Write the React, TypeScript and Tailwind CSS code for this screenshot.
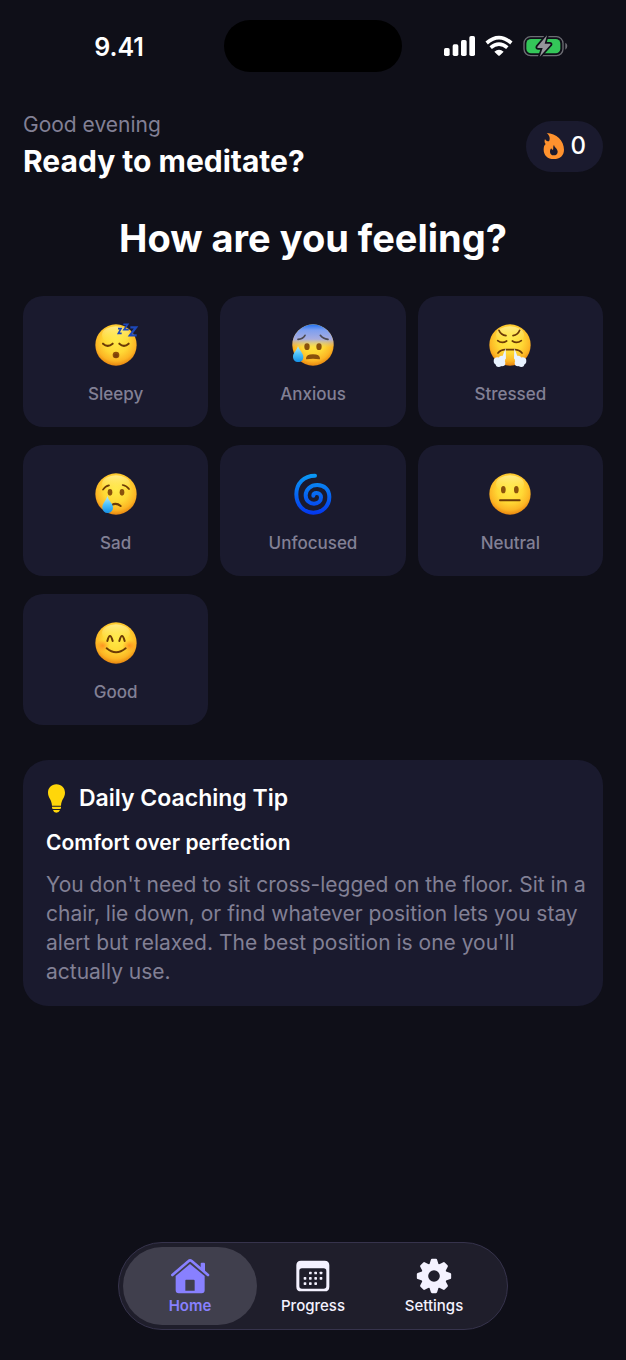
import { useId, useState } from "react";
import type { ReactNode } from "react";

const BROWN = "#6b3a06";

function Face({ children, blue = false }: { children: ReactNode; blue?: boolean }) {
    const id = useId();
    return (
        <svg viewBox="-72 -72 144 144" className="h-12 w-12" aria-hidden="true">
            <defs>
                <radialGradient id={`${id}base`} cx="0.5" cy="0.4" r="0.61">
                    <stop offset="0" stopColor="#ffea48" />
                    <stop offset="0.5" stopColor="#ffd835" />
                    <stop offset="0.8" stopColor="#fcb524" />
                    <stop offset="1" stopColor="#e6820e" />
                </radialGradient>
                <linearGradient id={`${id}blue`} x1="0" y1="0" x2="0" y2="1">
                    <stop offset="0" stopColor="#2270f0" />
                    <stop offset="0.14" stopColor="#7d9ff0" />
                    <stop offset="0.36" stopColor="#a8addf" />
                    <stop offset="0.56" stopColor="#d9bd8a" stopOpacity="0" />
                </linearGradient>
                <linearGradient id={`${id}shine`} x1="0" y1="0" x2="0" y2="1">
                    <stop offset="0" stopColor="#fffbc0" stopOpacity="0.6" />
                    <stop offset="1" stopColor="#ffee55" stopOpacity="0" />
                </linearGradient>
            </defs>
            <circle r="62" fill={`url(#${id}base)`} />
            {!blue && <ellipse cy="-30" rx="42" ry="26" fill={`url(#${id}shine)`} />}
            {blue && <circle r="62" fill={`url(#${id}blue)`} />}
            {children}
        </svg>
    );
}

function Tear({ d }: { d: string }) {
    const id = useId();
    return (
        <>
            <defs>
                <linearGradient id={id} x1="0" y1="0" x2="0" y2="1">
                    <stop offset="0" stopColor="#b8edff" />
                    <stop offset="0.5" stopColor="#4fc3fa" />
                    <stop offset="1" stopColor="#1590e6" />
                </linearGradient>
            </defs>
            <path d={d} fill={`url(#${id})`} />
        </>
    );
}

function Sleepy() {
    return (
        <Face>
            <g fill="none" stroke={BROWN} strokeWidth="6" strokeLinecap="round">
                <path d="M-39-4Q-25 9-10-4" />
                <path d="M10-4Q24 9 38-4" />
            </g>
            <circle cy="30" r="10" fill="#8f4d08" />
            <circle cy="32" r="6" fill="#7a400a" />
            <g fill="none" stroke="#1d48ba" strokeLinejoin="miter">
                <path d="M6-49H15L7-35H17" strokeWidth="5" />
                <path d="M22-62H35L24-46H38" strokeWidth="5" />
                <path d="M43-53H60L42-29H62" strokeWidth="7" />
            </g>
        </Face>
    );
}

function Anxious() {
    return (
        <Face blue>
            <g fill="none" stroke="#4c4a50" strokeWidth="5" strokeLinecap="round">
                <path d="M-45-17Q-30-18-24-29" />
                <path d="M45-17Q30-18 22-29" />
            </g>
            <ellipse cx="-18" cy="5" rx="8" ry="10" fill="#8a520c" />
            <ellipse cx="18" cy="5" rx="8" ry="10" fill="#8a520c" />
            <path d="M-19 41C-19 32-12 30 0 30S19 32 19 41Q0 37-19 41Z" fill="#8a520c" stroke="#8a520c" strokeWidth="4" strokeLinejoin="round" />
            <Tear d="M-45 3C-41 16-29 24-29 36C-29 45-35 51-44 51C-54 51-60 44-60 35C-60 24-49 17-45 3Z" />
        </Face>
    );
}

function Stressed() {
    return (
        <Face>
            <g fill="none" stroke={BROWN} strokeWidth="5" strokeLinecap="round">
                <path d="M-33-44Q-27-30-12-28" />
                <path d="M29-44Q24-30 9-28" />
                <path d="M-37-13Q-24-3-10-12" />
                <path d="M7-12Q20-3 34-13" />
                <path d="M-36 24Q-28 14-14 14H14Q28 14 36 24" />
            </g>
            <g fill="#e9f3ff">
                <path d="M-13 9L-24 38L-12 42Z" />
                <path d="M13 9L12 42L24 38Z" />
                <circle cx="-24" cy="42" r="10" />
                <circle cx="-38" cy="48" r="11" />
                <circle cx="-24" cy="54" r="10" />
                <circle cx="-34" cy="57" r="9" />
                <circle cx="24" cy="42" r="10" />
                <circle cx="38" cy="48" r="11" />
                <circle cx="24" cy="54" r="10" />
                <circle cx="34" cy="57" r="9" />
            </g>
        </Face>
    );
}

function Sad() {
    return (
        <Face>
            <g fill="none" stroke={BROWN} strokeWidth="5" strokeLinecap="round">
                <path d="M-39-13Q-32-24-21-26" />
                <path d="M39-15Q32-25 20-27" />
                <path d="M-13 33Q1 25 14 36" strokeWidth="6" />
            </g>
            <ellipse cx="-18" cy="-5" rx="7" ry="10" fill="#8a520c" />
            <ellipse cx="18" cy="-5" rx="7" ry="10" fill="#8a520c" />
            <Tear d="M-26 6C-22 21-9 29-9 41C-9 50-16 57-25 57C-35 57-41 50-41 40C-41 28-30 21-26 6Z" />
        </Face>
    );
}

function Unfocused() {
    return (
        <svg viewBox="25 32 144 144" className="h-12 w-12" aria-hidden="true">
            <defs>
                <linearGradient id="swirl" gradientUnits="userSpaceOnUse" x1="0" y1="44" x2="0" y2="165">
                    <stop offset="0" stopColor="#0a9af5" />
                    <stop offset="1" stopColor="#0437ee" />
                </linearGradient>
            </defs>
            <path
                d="M103 49C70 49 47 72 47 105C47 137 69 160 98 160C126 160 146 139 146 113C146 90 130 77 110 77C90 77 75 90 75 108C75 123 86 133 100 133C113 133 121 125 121 114C121 106 115 101 108 101C102 101 98 104 98 109"
                fill="none"
                stroke="url(#swirl)"
                strokeWidth="12"
                strokeLinecap="round"
            />
        </svg>
    );
}

function Neutral() {
    return (
        <Face>
            <ellipse cx="-20" cy="-13" rx="7" ry="11" fill="#8a520c" />
            <ellipse cx="19" cy="-13" rx="7" ry="11" fill="#8a520c" />
            <path d="M-30 19H29" stroke={BROWN} strokeWidth="6" strokeLinecap="round" />
        </Face>
    );
}

function Good() {
    const id = useId();
    return (
        <Face>
            <defs>
                <radialGradient id={id}>
                    <stop offset="0" stopColor="#ff7a1a" stopOpacity="0.7" />
                    <stop offset="1" stopColor="#ff8a1a" stopOpacity="0" />
                </radialGradient>
            </defs>
            <ellipse cx="-40" cy="8" rx="21" ry="18" fill={`url(#${id})`} />
            <ellipse cx="40" cy="8" rx="21" ry="18" fill={`url(#${id})`} />
            <g fill="none" stroke={BROWN} strokeWidth="6" strokeLinecap="round">
                <path d="M-26-6Q-18-36-10-6" />
                <path d="M10-6Q18-36 26-6" />
                <path d="M-28 16Q0 40 29 16" />
            </g>
        </Face>
    );
}

function SignalIcon() {
    return (
        <svg viewBox="72 45 93 66" className="h-[22px] w-[31px]" fill="#fff" aria-hidden="true">
            <rect x="72" y="84" width="17" height="24" rx="5" />
            <rect x="98" y="73" width="17" height="35" rx="5" />
            <rect x="123" y="60" width="17" height="48" rx="5" />
            <rect x="148" y="48" width="17" height="60" rx="5" />
        </svg>
    );
}

function WifiIcon() {
    return (
        <svg viewBox="196 45 84 66" className="h-[22px] w-7" aria-hidden="true">
            <g fill="none" stroke="#fff" strokeWidth="11">
                <path d="M201 69Q238 37 275 69" />
                <path d="M213 83Q238 62 263 83" />
            </g>
            <path d="M224 95Q238 84 252 95L241 106Q238 109 235 106Z" fill="#fff" />
        </svg>
    );
}

function BatteryIcon() {
    return (
        <svg viewBox="311 45 135 66" className="h-[22px] w-[45px]" aria-hidden="true">
            <rect x="314" y="50" width="117" height="57" rx="20" fill="none" stroke="#6c6c73" strokeWidth="4" />
            <path d="M438 68Q444 71 444 78T438 89Z" fill="#6c6c73" />
            <rect x="321" y="57" width="102" height="43" rx="14" fill="#34c759" />
            <path
                d="M383 46L354 80Q352 84 357 84H370L361 110L393 75Q396 71 391 71H376Z"
                fill="#96969b"
                stroke="#0f0f18"
                strokeWidth="10"
                paintOrder="stroke"
                strokeLinejoin="round"
            />
        </svg>
    );
}

function FlameIcon() {
    return (
        <svg viewBox="96 66 66 84" className="h-7 w-[22px]" aria-hidden="true">
            <path
                fillRule="evenodd"
                fill="#ff922e"
                d="M107 69C136 70 159 92 159 119C159 137 147 147 128 147C110 147 98 136 98 119C98 110 100 105 104 102C100 98 100 92 102 87C104 92 108 94 114 94C119 85 115 75 107 69ZM129 104C129 111 140 116 140 125C140 132 135 136 128 136C121 136 117 131 117 125C117 120 119 117 121 115C122 119 124 120 126 119C128 116 125 110 129 104Z"
            />
        </svg>
    );
}

function BulbIcon() {
    return (
        <svg viewBox="48 39 63 87" className="h-[29px] w-[21px]" fill="#ffd60a" aria-hidden="true">
            <path d="M79 40C95 40 105 51 105 65C105 81 94 84 93 104H66C65 84 54 81 54 65C54 51 64 40 79 40Z" />
            <path d="M66 107H93V110Q93 114 89 114H70Q66 114 66 110Z" />
            <path d="M69 117H90Q87 125 79 125T69 117Z" />
        </svg>
    );
}

function HomeIcon() {
    return (
        <svg viewBox="180 83 120 108" className="h-9 w-10" aria-hidden="true">
            <path d="M187 134L236 92Q240 88 245 92L294 134" fill="none" stroke="currentColor" strokeWidth="8" strokeLinecap="round" strokeLinejoin="round" />
            <path d="M272 114V100Q272 97 275 97H282Q285 97 285 100V126Z" fill="currentColor" />
            <path
                fillRule="evenodd"
                fill="currentColor"
                d="M197 137L240 101L284 137V180Q284 189 275 189H206Q197 189 197 180ZM228 148Q226 148 226 151V181H254V151Q254 148 251 148Z"
            />
        </svg>
    );
}

function ProgressIcon() {
    const dots = [
        [603, 128], [619, 128], [635, 128],
        [587, 144], [603, 144], [619, 144], [635, 144],
        [587, 160], [603, 160], [619, 160],
    ];
    return (
        <svg viewBox="551 83 120 108" className="h-9 w-10" fill="currentColor" aria-hidden="true">
            <path
                fillRule="evenodd"
                d="M575 91H646Q660 91 660 105V169Q660 183 646 183H575Q561 183 561 169V105Q561 91 575 91ZM578 114Q570 114 570 122V167Q570 175 578 175H643Q651 175 651 167V122Q651 114 643 114Z"
            />
            {dots.map(([x, y]) => (
                <rect key={`${x}-${y}`} x={x - 4} y={y - 4} width="8" height="8" rx="2" />
            ))}
        </svg>
    );
}

function SettingsIcon() {
    const teeth = [0, 45, 90, 135, 180, 225, 270, 315];
    return (
        <svg viewBox="-60 -54 120 108" className="h-9 w-10" aria-hidden="true">
            <circle r="28" fill="none" stroke="currentColor" strokeWidth="21" />
            {teeth.map((angle) => (
                <path
                    key={angle}
                    d="M-10-35L-6-48H6L10-35Z"
                    transform={`rotate(${angle})`}
                    fill="currentColor"
                    stroke="currentColor"
                    strokeWidth="7"
                    strokeLinejoin="round"
                />
            ))}
        </svg>
    );
}

const moods = [
    { label: "Sleepy", icon: <Sleepy /> },
    { label: "Anxious", icon: <Anxious /> },
    { label: "Stressed", icon: <Stressed /> },
    { label: "Sad", icon: <Sad /> },
    { label: "Unfocused", icon: <Unfocused /> },
    { label: "Neutral", icon: <Neutral /> },
    { label: "Good", icon: <Good /> },
];

const tabs = [
    { label: "Home", icon: <HomeIcon />, width: "w-[134px]" },
    { label: "Progress", icon: <ProgressIcon />, width: "w-28" },
    { label: "Settings", icon: <SettingsIcon />, width: "w-[130px]" },
];

function StatusBar() {
    return (
        <div className="grid grid-cols-[1fr_178px_1fr] items-center py-5">
            <span className="pt-0.5 pl-3.5 text-center text-[25px] leading-8 font-semibold">9.41</span>
            <div className="h-[52px] rounded-full bg-black" />
            <div className="flex items-center justify-center gap-2.5 pr-4">
                <SignalIcon />
                <WifiIcon />
                <BatteryIcon />
            </div>
        </div>
    );
}

export default function App() {
    const [active, setActive] = useState("Home");

    return (
        <div className="flex min-h-screen flex-col bg-[#0f0f18] font-['Inter','Liberation_Sans',sans-serif] text-white">
            <StatusBar />

            <main className="px-[23px] pt-[19px]">
                <header className="flex items-center justify-between">
                    <div>
                        <p className="text-[21px] leading-7 text-[#828095]">Good evening</p>
                        <h1 className="mt-0.5 text-[30px] leading-10 font-bold">Ready to meditate?</h1>
                    </div>
                    <div className="flex h-[51px] items-center gap-1.5 rounded-full bg-[#1a1a2e] px-[17px]">
                        <FlameIcon />
                        <span className="text-2xl font-medium">0</span>
                    </div>
                </header>

                <h2 className="mt-[33px] text-center text-[38px] leading-12 font-bold">How are you feeling?</h2>

                {/* Mood grid */}
                <div className="mt-[34px] grid grid-cols-3 gap-x-3 gap-y-[18px]">
                    {moods.map((mood) => (
                        <button
                            key={mood.label}
                            type="button"
                            className="flex h-[131px] flex-col items-center justify-center gap-[13px] rounded-[20px] bg-[#1a1a2e] pt-1"
                        >
                            {mood.icon}
                            <span className="text-[17px] leading-6 font-medium text-[#828095]">{mood.label}</span>
                        </button>
                    ))}
                </div>

                {/* Daily tip */}
                <section className="mt-[35px] rounded-[25px] bg-[#1a1a2e] pt-[22px] pr-3 pb-5 pl-[23px]">
                    <h3 className="flex items-center gap-3 text-[23px] leading-8 font-semibold">
                        <BulbIcon />
                        Daily Coaching Tip
                    </h3>
                    <p className="mt-3.5 text-[21px] leading-[30px] font-semibold">Comfort over perfection</p>
                    <p className="mt-3 text-[21px] leading-[29px] text-[#828095]">
                        You don't need to sit cross-legged on the floor. Sit in a chair, lie down, or find whatever
                        position lets you stay alert but relaxed. The best position is one you'll actually use.
                    </p>
                </section>
            </main>

            <nav className="mx-auto mt-auto mb-[30px] flex h-[88px] rounded-full border border-[#36334c] bg-[#1f1e2b] py-1 pr-2 pl-1">
                {tabs.map((tab) => (
                    <button
                        key={tab.label}
                        type="button"
                        onClick={() => setActive(tab.label)}
                        aria-current={active === tab.label ? "page" : undefined}
                        className={`flex flex-col items-center justify-center rounded-full pt-0.5 ${tab.width} ${
                            active === tab.label ? "bg-[#403f4d] text-[#8880ff]" : "text-[#f4f2ff]"
                        }`}
                    >
                        {tab.icon}
                        <span className={`mt-0.5 text-[15px] leading-5 ${active === tab.label ? "font-semibold" : "font-medium"}`}>
                            {tab.label}
                        </span>
                    </button>
                ))}
            </nav>
        </div>
    );
}
